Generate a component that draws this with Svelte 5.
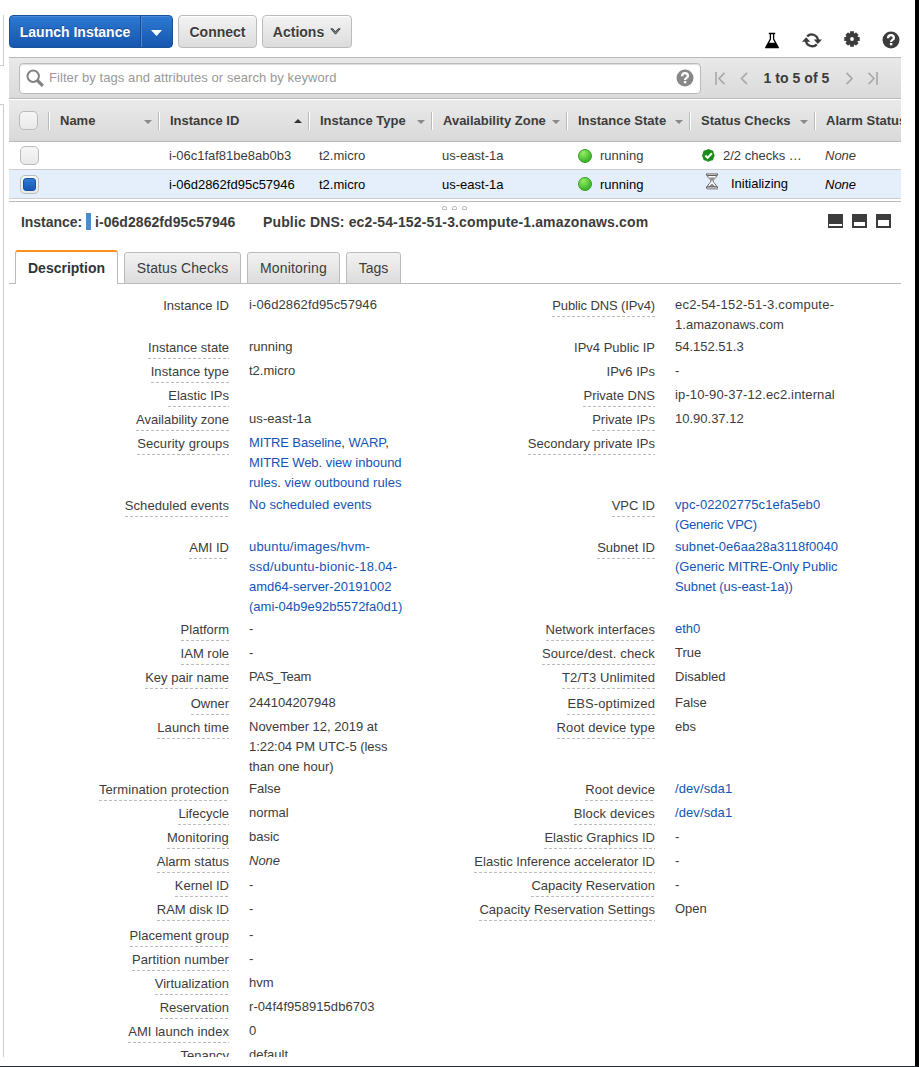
<script>
  const columns = [
    { name: 'Name', width: 110, sort: 'down' },
    { name: 'Instance ID', width: 150, sort: 'up' },
    { name: 'Instance Type', width: 123, sort: 'down' },
    { name: 'Availability Zone', width: 135, sort: 'down' },
    { name: 'Instance State', width: 123, sort: 'down' },
    { name: 'Status Checks', width: 125, sort: 'down' },
    { name: 'Alarm Status', width: 86, sort: '' }
  ];

  const instances = [
    { id: 'i-06c1faf81be8ab0b3', ok: true, status: '2/2 checks …' },
    { id: 'i-06d2862fd95c57946', ok: false, status: 'Initializing' }
  ];

  const link = (text, ls = 0) => ({ text, link: true, ls });
  const plain = (text, ls = 0) => ({ text, ls });
  const italic = (text) => ({ text, italic: true, ls: 0 });

  // Each row: height, left label, left value lines, right label, right value lines
  const details = [
    [42, 'Instance ID', [[plain('i-06d2862fd95c57946', 0.12)]], 'Public DNS (IPv4)', [[plain('ec2-54-152-51-3.compute-', 0.22)], [plain('1.amazonaws.com', 0.04)]]],
    [24, 'Instance state', [[plain('running')]], 'IPv4 Public IP', [[plain('54.152.51.3')]]],
    [24, 'Instance type', [[plain('t2.micro')]], 'IPv6 IPs', [[plain('-')]]],
    [24, 'Elastic IPs', [], 'Private DNS', [[plain('ip-10-90-37-12.ec2.internal', 0.14)]]],
    [24, 'Availability zone', [[plain('us-east-1a', 0.08)]], 'Private IPs', [[plain('10.90.37.12')]]],
    [62, 'Security groups', [
      [link('MITRE Baseline', -0.12), plain(', '), link('WARP'), plain(',')],
      [link('MITRE Web', -0.12), plain('. '), link('view inbound')],
      [link('rules'), plain('. '), link('view outbound rules', 0.08)]
    ], 'Secondary private IPs', []],
    [42, 'Scheduled events', [[link('No scheduled events', 0.06)]], 'VPC ID', [[link('vpc-02202775c1efa5eb0', 0.1)], [link('(Generic VPC)', -0.2)]]],
    [82, 'AMI ID', [[link('ubuntu/images/hvm-', 0.18)], [link('ssd/ubuntu-bionic-18.04-', 0.22)], [link('amd64-server-20191002')], [link('(ami-04b9e92b5572fa0d1)')]],
      'Subnet ID', [[link('subnet-0e6aa28a3118f0040', 0.06)], [link('(Generic MITRE-Only Public', -0.06)], [link('Subnet (us-east-1a))', -0.07)]]],
    [24, 'Platform', [[plain('-')]], 'Network interfaces', [[link('eth0')]]],
    [24, 'IAM role', [[plain('-')]], 'Source/dest. check', [[plain('True')]]],
    [26, 'Key pair name', [[plain('PAS_Team', -0.25)]], 'T2/T3 Unlimited', [[plain('Disabled')]]],
    [24, 'Owner', [[plain('244104207948')]], 'EBS-optimized', [[plain('False')]]],
    [62, 'Launch time', [[plain('November 12, 2019 at')], [plain('1:22:04 PM UTC-5 (less', -0.05)], [plain('than one hour)')]], 'Root device type', [[plain('ebs')]]],
    [24, 'Termination protection', [[plain('False')]], 'Root device', [[link('/dev/sda1', 0.1)]]],
    [24, 'Lifecycle', [[plain('normal')]], 'Block devices', [[link('/dev/sda1', 0.1)]]],
    [24, 'Monitoring', [[plain('basic')]], 'Elastic Graphics ID', [[plain('-')]]],
    [24, 'Alarm status', [[italic('None')]], 'Elastic Inference accelerator ID', [[plain('-')]]],
    [24, 'Kernel ID', [[plain('-')]], 'Capacity Reservation', [[plain('-')]]],
    [26, 'RAM disk ID', [[plain('-')]], 'Capacity Reservation Settings', [[plain('Open')]]],
    [24, 'Placement group', [[plain('-')]], '', []],
    [24, 'Partition number', [[plain('-')]], '', []],
    [24, 'Virtualization', [[plain('hvm')]], '', []],
    [24, 'Reservation', [[plain('r-04f4f958915db6703', 0.07)]], '', []],
    [24, 'AMI launch index', [[plain('0')]], '', []],
    [24, 'Tenancy', [[plain('default')]], '', []]
  ];
  const noHint = ['Instance ID', 'IPv4 Public IP', 'IPv6 IPs'];
  const labelSpacing = {
    'Public DNS (IPv4)': -0.12,
    'Security groups': 0.1,
    'Scheduled events': 0.05,
    'Network interfaces': 0.1,
    'Source/dest. check': 0.14,
    'EBS-optimized': 0.12,
    'Root device type': 0.1,
    'Block devices': 0.14,
    'Root device': 0.1,
    'Launch time': 0.08,
    'T2/T3 Unlimited': 0.08,
    'Termination protection': 0.1,
    'Monitoring': 0.14,
    'Partition number': 0.1,
    'Placement group': 0.08,
    'Instance type': 0.08,
    'Capacity Reservation Settings': 0.05,
    'AMI launch index': 0.07
  };
</script>

{#snippet label(text)}
  <div class="label">
    {#if text}<span class:hinted={!noHint.includes(text)} style:letter-spacing="{labelSpacing[text] ?? 0}px">{text}</span>{/if}
  </div>
{/snippet}

{#snippet value(lines)}
  <div class="value">
    {#each lines as line}
      <div class="line">{#each line as part}<span class:link={part.link} class:italic={part.italic} style:letter-spacing="{part.ls}px">{part.text}</span>{/each}</div>
    {/each}
  </div>
{/snippet}

<div class="page">
  <div class="rail">
    <div class="rail-top"></div>
    <div class="rail-bottom"></div>
  </div>

  <main>
    <div class="toolbar">
      <div class="split">
        <button class="launch">Launch Instance</button>
        <button class="drop" aria-label="More">
          <svg width="11" height="6" viewBox="0 0 11 6"><path d="M0 0h11L5.5 6z" fill="#fff" /></svg>
        </button>
      </div>
      <button class="gray connect">Connect</button>
      <button class="gray actions">Actions
        <svg width="11" height="7" viewBox="0 0 11 7"><path d="M.8.8h2l2.7 3 2.7-3h2L5.5 6.2z" fill="#888" stroke="#333" stroke-width=".9" /></svg>
      </button>
      <div class="tools">
        <svg width="16" height="17" viewBox="0 0 16 17"><path d="M4.800 1.500h6.400M6.400 1.500v5.500L2 15.200h12L9.600 7V1.500" fill="none" stroke="#000" stroke-width="1.300" /><path d="M4.300 10.800h7.400l3.300 5.400H1z" /></svg>
        <svg width="20" height="18" viewBox="0 0 20 18"><path d="M5.200 5.400A6.300 6.300 0 0 1 16 9.900M14.800 13.400A6.300 6.300 0 0 1 4 8.900" fill="none" stroke="#3c3c3c" stroke-width="2.300" /><path d="M11.700 8.600h8.300l-4.150 4.500zM0 10.700h8.300L4.150 6.200z" fill="#3c3c3c" /></svg>
        <svg class="gear" width="16" height="16" viewBox="0 0 16 16"><g stroke="#3c3c3c" stroke-width="3.800"><path d="M8 .3v15.400M.3 8h15.400M2.700 2.700l10.600 10.600M13.300 2.700 2.700 13.300" /></g><circle cx="8" cy="8" r="6.200" fill="#3c3c3c" /><circle cx="8" cy="8" r="1.900" fill="#fff" /></svg>
        <svg width="18" height="18" viewBox="0 0 18 18"><circle cx="9" cy="9" r="8.500" fill="#3c3c3c" /><path d="M6.1 7.2Q6.1 4.2 9 4.2T11.900 7Q11.900 8.200 10.200 9.100Q9.100 9.800 9.100 11" fill="none" stroke="#fff" stroke-width="2.300" /><path d="M7.900 12h2.400v2.300H7.900z" fill="#fff" /></svg>
      </div>
    </div>

    <div class="filter">
      <div class="search">
        <svg width="18" height="18" viewBox="0 0 18 18"><circle cx="7.200" cy="7.200" r="5.700" fill="none" stroke="#828282" stroke-width="2" /><path d="M11.300 11.300l5.600 5.600" stroke="#828282" stroke-width="3.200" /></svg>
        <span>Filter by tags and attributes or search by keyword</span>
        <svg class="hint" width="18" height="18" viewBox="0 0 18 18"><circle cx="9" cy="9" r="8.5" fill="#888" /><path d="M6.1 7.2Q6.1 4.2 9 4.2T11.900 7Q11.900 8.200 10.200 9.100Q9.100 9.800 9.100 11" fill="none" stroke="#fff" stroke-width="2.300" /><path d="M7.900 12h2.400v2.300H7.900z" fill="#fff" /></svg>
      </div>
      <div class="pager">
        <svg width="33" height="13" viewBox="0 0 33 13" fill="none" stroke="#aaa" stroke-width="1.7"><path d="M1 0v13M9.5.8 4 6.5l5.5 5.7M32 .8 26.500 6.5 32 12.200" /></svg>
        <b>1 to 5 of 5</b>
        <svg width="33" height="13" viewBox="0 0 33 13" fill="none" stroke="#aaa" stroke-width="1.7"><path d="M1.5.8 7 6.5l-5.5 5.7M23.5.8 29 6.5l-5.5 5.7M32 0v13" /></svg>
      </div>
    </div>

    <div class="thead">
      <div class="pick"><i class="box"></i></div>
      {#each columns as c}
        <div class="th" style:width="{c.width}px">
          <span>{c.name}</span>
          {#if c.sort}<i class="sort {c.sort}"></i>{/if}
        </div>
      {/each}
    </div>
    {#each instances as inst, n}
      <div class="tr" class:selected={n === 1}>
        <div class="pick"><i class="box" class:checked={n === 1}></i></div>
        <span class="c-id">{inst.id}</span>
        <span class="c-type">t2.micro</span>
        <span class="c-zone">us-east-1a</span>
        <span class="c-state"><i class="dot"></i>running</span>
        <span class="c-status" class:pending={!inst.ok}>
          {#if inst.ok}
            <svg width="13" height="13" viewBox="0 0 13 13"><path d="M6.5 0 8.7 1l2.4.7.6 2.4 1 2.4-1 2.3-.8 2.4-2.4.6-2.2 1-2.3-1-2.4-.7-.7-2.3-.9-2.3 1-2.4.6-2.4L4.2 1z" fill="#198c19" /><path d="m3.3 6.5 2.3 2.4 4.3-4.6" fill="none" stroke="#fff" stroke-width="2" /></svg>
          {:else}
            <svg width="14" height="17" viewBox="0 0 14 17"><path d="M2.500 2.500h9c0 3-3.500 3.500-3.500 5.500s3.500 3 3.500 6h-9c0-3 3.500-4 3.500-6s-3.500-2.500-3.500-5.500z" fill="#fff" stroke="#666" /><path d="M4 4.500h6L7 8zM7 10.500l3.800 3.500H3.200z" fill="#8a8a8a" /><path d="M1 1.500h12M1 14.500h12" stroke="#555" stroke-width="2" /><path d="M2 1.500h10M2 14.500h10" stroke="#ddd" stroke-width=".7" /><path d="M2 16.200h11" stroke="#aaa" /></svg>
          {/if}
          <em>{inst.status}</em>
        </span>
        <span class="c-alarm">None</span>
      </div>
    {/each}

    <div class="splitter"><i></i><i></i><i></i></div>

    <div class="summary">
      <b class="s-name">Instance:</b><i class="mark"></i><b class="s-id">i-06d2862fd95c57946</b>
      <b class="s-dns">Public DNS: ec2-54-152-51-3.compute-1.amazonaws.com</b>
      <div class="panes"><i class="p1"></i><i class="p2"></i><i class="p3"></i></div>
    </div>

    <div class="tabs">
      <div class="tab active">Description</div>
      <div class="tab t2">Status Checks</div>
      <div class="tab t3">Monitoring</div>
      <div class="tab t4">Tags</div>
    </div>

    <div class="details">
      {#each details as [height, ll, lv, rl, rv]}
        <div class="detail" style:height="{height}px">
          {@render label(ll)}
          {@render value(lv)}
          {@render label(rl)}
          {@render value(rv)}
        </div>
      {/each}
    </div>
  </main>
</div>

<style>
  :global(body) { margin: 0; background: #fff; }
  .page {
    box-sizing: border-box; width: 919px; height: 1067px; overflow: hidden; display: flex;
    border-right: 4px solid #000; border-bottom: 1px solid #232b3b;
    font: 13px/20px "Liberation Sans", Arial, sans-serif; color: #3c3c3c; background: #fff;
  }
  i, em { font-style: normal; display: block; }
  svg { display: block; flex: none; }
  .rail { width: 9px; flex: none; padding-top: 15px; box-sizing: border-box; }
  .rail div { box-sizing: border-box; width: 4px; border-right: 1px solid #ccc; }
  .rail-top { height: 51px; border-bottom: 1px solid #ccc; }
  .rail-bottom { height: 953px; margin-top: 38px; border-top: 1px solid #ccc; }
  main { width: 892px; height: 1057px; overflow: hidden; }

  .toolbar { display: flex; height: 57px; padding-top: 15px; box-sizing: border-box; }
  button {
    box-sizing: border-box; height: 33px; padding: 0; margin: 0; border: 0; background: none;
    font: bold 14px/18px "Liberation Sans", Arial, sans-serif; color: #3c3c3c; white-space: nowrap;
  }
  .split {
    display: flex; box-sizing: border-box; width: 164px; height: 33px; border: 1px solid #1a5299; border-radius: 4px;
    background: linear-gradient(#2d79d2, #1656af); box-shadow: inset 0 1px #4a8bda;
  }
  .split button { height: 31px; color: #fff; }
  .launch { width: 131px; border-right: 1px solid #164b92; text-shadow: 0 -1px #1a4e94; }
  .drop { flex: 1; display: grid; place-items: center; padding: 3px 2px 0 0; border-left: 1px solid #4b89d5; }
  .gray {
    display: flex; align-items: center; justify-content: center; border: 1px solid #bbb; border-radius: 4px;
    background: linear-gradient(#f3f3f3, #dcdcdc); text-shadow: 0 1px #fff; box-shadow: inset 0 1px #fff;
  }
  .connect { width: 79px; margin-left: 5px; }
  .actions { width: 90px; margin-left: 5px; gap: 6px; }
  .actions svg { margin-top: -1px; }
  .tools { margin-left: auto; display: flex; align-items: center; padding: 16px 0 0; height: 18px; }
  .tools svg + svg { margin-left: 22px; }
  .tools svg:last-child { margin-right: 1px; }
  .tools .gear { margin-top: -2px; }
  .tools svg:last-child { margin-top: -1px; }

  .filter {
    display: flex; align-items: center; box-sizing: border-box; height: 42px; padding-left: 10px;
    border-top: 1px solid #bbb; border-bottom: 1px solid #bbb; background: linear-gradient(#e9e9e9, #dadada);
  }
  .search {
    display: flex; align-items: center; box-sizing: border-box; width: 682px; height: 31px; padding: 0 6px;
    border: 1px solid #bbb; border-radius: 4px; background: #fff; color: #999; box-shadow: inset 0 1px 1px #ddd;
  }
  .search span { margin-left: 5px; letter-spacing: .07px; }
  .search .hint { margin-left: auto; }
  .pager { display: flex; align-items: center; margin-left: 14px; }
  .pager b { width: 97px; text-align: center; font-size: 14px; letter-spacing: .05px; }

  .thead {
    display: flex; align-items: center; box-sizing: border-box; height: 43px; overflow: hidden;
    border-top: 1px solid #fff; border-bottom: 1px solid #bbb; background: linear-gradient(#eaeaea, #d9d9d9);
  }
  .pick { width: 39px; flex: none; padding-left: 10px; box-sizing: border-box; }
  .box {
    box-sizing: border-box; width: 19px; height: 19px; border: 1px solid #bbb; border-radius: 5px;
    background: linear-gradient(#f6f6f6, #e9e9e9);
  }
  .tr .box { margin-left: 1px; }
  .checked { padding: 2px; background-clip: padding-box; }
  .checked::after {
    content: ""; display: block; box-sizing: border-box; width: 13px; height: 13px; border: 1px solid #164f9c;
    border-radius: 3px; background: linear-gradient(#2e7bd5, #1757b1);
  }
  .th {
    display: flex; align-items: center; box-sizing: border-box; flex: none; height: 18px; padding: 0 6px 0 11px;
    border-left: 1px solid #bbb; box-shadow: inset 1px 0 #fff; font-weight: bold; white-space: nowrap;
  }
  .sort { margin-left: auto; width: 0; height: 0; border: 4px solid transparent; }
  .sort.down { border-top-color: #888; border-bottom: 0; margin-top: 3px; }
  .sort.up { border-bottom-color: #333; border-top: 0; }
  .tr {
    display: flex; align-items: center; box-sizing: border-box; height: 28px; border-bottom: 1px solid #ccc; white-space: nowrap;
  }
  .selected { height: 29px; padding-top: 1px; background: #e5effc; color: #000; }
  .selected .box { margin-top: -1px; }
  .c-id { margin-left: 121px; width: 150px; }
  .c-type { width: 123px; }
  .c-zone { width: 136px; }
  .c-state { display: flex; align-items: center; width: 124px; }
  .dot {
    box-sizing: border-box; width: 14px; height: 14px; margin-right: 8px; border: 1px solid #389b1f; border-radius: 50%;
    background: radial-gradient(circle at 35% 25%, #97ed65, #2cad20 85%);
  }
  .selected .dot { margin-top: -1px; }
  .c-status { display: flex; align-items: center; width: 123px; gap: 8px; }
  .pending { padding-left: 3px; width: 120px; gap: 12px; height: 20px; }
  .pending svg { margin-top: -6px; }
  .pending em { margin-top: -2px; }
  .c-alarm, .italic { font-style: italic; }

  .splitter {
    display: flex; justify-content: center; gap: 5px; box-sizing: border-box; height: 8px; margin-top: 2px; padding: 4px 2px 0 0;
    border-top: 1px solid #bbb;
  }
  .splitter i { box-sizing: border-box; width: 5px; height: 4px; border: 1px solid #bbb; border-radius: 2px 2px 0 0; }

  .summary {
    display: flex; align-items: center; height: 25px; padding: 0 10px 0 12px; white-space: nowrap;
    font-size: 14px;
  }
  .s-name { width: 65px; letter-spacing: -.05px; }
  .mark { width: 5px; height: 17px; background: #4a8ccc; }
  .s-id { margin-left: 4px; width: 168px; letter-spacing: .06px; }
  .s-dns { letter-spacing: .14px; }
  .panes { margin: -2px 0 0 auto; display: flex; gap: 9px; }
  .panes i { box-sizing: border-box; width: 15px; height: 14px; border: 2px solid #3c3c3c; }
  .panes .p1 { border-width: 10px 1px 2px; }
  .panes .p2 { border-top-width: 8px; }
  .panes .p3 { border-top-width: 6px; }

  .tabs {
    display: flex; align-items: flex-end; box-sizing: border-box; height: 50px; padding-left: 6px; gap: 6px;
    box-shadow: inset 0 -1px #bbb; font-size: 14px;
  }
  .tab {
    box-sizing: border-box; height: 32px; border: 1px solid #bbb; border-radius: 3px 3px 0 0; text-align: center;
    line-height: 31px; background: linear-gradient(#f2f2f2, #dcdcdc);
  }
  .active { width: 103px; height: 34px; border-top: 2px solid #ff8f1f; border-bottom: 0; background: #fff; font-weight: bold; line-height: 33px; color: #333; }
  .t2 { width: 117px; letter-spacing: .1px; }
  .t3 { width: 93px; letter-spacing: .15px; }
  .t4 { width: 55px; }

  .details { padding-top: 10px; }
  .detail { display: grid; grid-template-columns: 220px 166px 220px 200px; column-gap: 20px; }
  .label { text-align: right; white-space: nowrap; padding-top: 2px; }
  .label span { display: inline-block; height: 21px; }
  .label .hinted {
    background: repeating-linear-gradient(90deg, #bbb 0 3px, transparent 3px 5px) 0 100% / 100% 1px no-repeat;
  }
  .value { padding-top: 1px; }
  .line { white-space: pre; }
  .link { color: #1255b5; }
</style>
